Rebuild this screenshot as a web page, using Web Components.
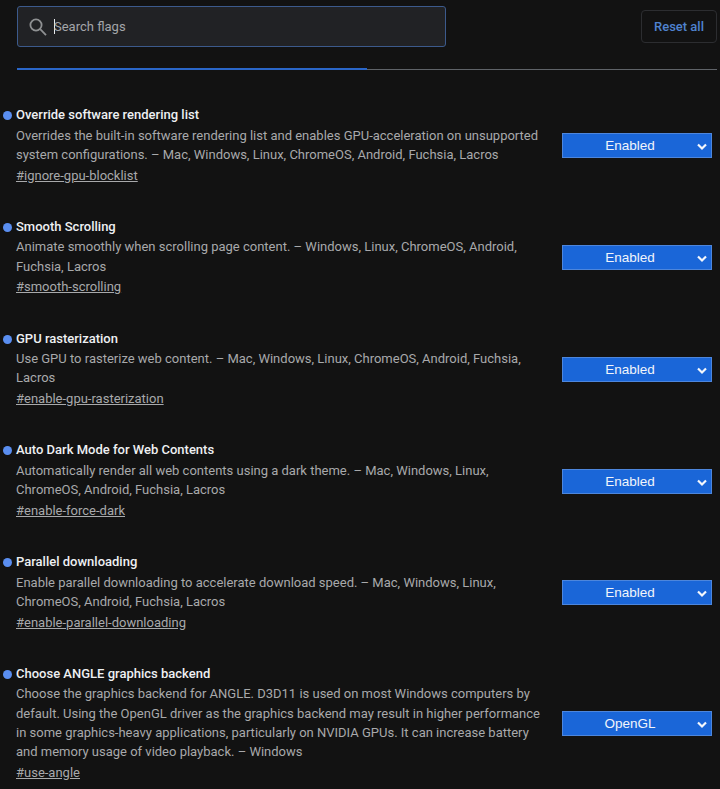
<!DOCTYPE html>
<html lang="en">
<head>
<meta charset="utf-8">
<title>Flags</title>
<style>
  html, body { margin: 0; background: #121212; }
  body { font-family: Roboto, "Liberation Sans", sans-serif; font-size: 13px; overflow: hidden; height: 789px; }
</style>
</head>
<body>
<flags-page>
  <flag-item name="Override software rendering list" link="#ignore-gpu-blocklist" value="Enabled">Overrides the built-in software rendering list and enables GPU-acceleration on unsupported system configurations. – Mac, Windows, Linux, ChromeOS, Android, Fuchsia, Lacros</flag-item>
  <flag-item name="Smooth Scrolling" link="#smooth-scrolling" value="Enabled">Animate smoothly when scrolling page content. – Windows, Linux, ChromeOS, Android, Fuchsia, Lacros</flag-item>
  <flag-item name="GPU rasterization" link="#enable-gpu-rasterization" value="Enabled">Use GPU to rasterize web content. – Mac, Windows, Linux, ChromeOS, Android, Fuchsia, Lacros</flag-item>
  <flag-item name="Auto Dark Mode for Web Contents" link="#enable-force-dark" value="Enabled">Automatically render all web contents using a dark theme. – Mac, Windows, Linux, ChromeOS, Android, Fuchsia, Lacros</flag-item>
  <flag-item name="Parallel downloading" link="#enable-parallel-downloading" value="Enabled">Enable parallel downloading to accelerate download speed. – Mac, Windows, Linux, ChromeOS, Android, Fuchsia, Lacros</flag-item>
  <flag-item name="Choose ANGLE graphics backend" link="#use-angle" value="OpenGL">Choose the graphics backend for ANGLE. D3D11 is used on most Windows computers by default. Using the OpenGL driver as the graphics backend may result in higher performance in some graphics-heavy applications, particularly on NVIDIA GPUs. It can increase battery and memory usage of video playback. – Windows</flag-item>
</flags-page>

<script>
class FlagsPage extends HTMLElement {
    constructor() {
        super();
        this.attachShadow({ mode: "open" });
        this.shadowRoot.innerHTML = `
            <style>
                :host{
                    display: block;
                    color: #a8a9ab;
                }
                #header{
                    display: flex;
                    justify-content: space-between;
                    align-items: center;
                    padding: 6px 3px 0 17px;
                }
                #search{
                    box-sizing: border-box;
                    width: 429px;
                    height: 41px;
                    display: flex;
                    align-items: center;
                    padding-left: 11px;
                    background: #212225;
                    border: 1px solid #3c5a8c;
                    border-radius: 3px;
                    color: #a4a6a9;
                    font-size: 13px;
                }
                #search svg{
                    flex: none;
                    margin-right: 5px;
                }
                #caret{
                    width: 1px;
                    height: 15px;
                    background: #e8eaed;
                    margin-right: -1px;
                }
                #reset{
                    box-sizing: border-box;
                    width: 76px;
                    height: 33px;
                    display: flex;
                    align-items: center;
                    justify-content: center;
                    border: 1px solid #2c2d30;
                    border-radius: 4px;
                    color: #4f82cf;
                    font-weight: 500;
                    font-size: 13px;
                }
                #tabs{
                    display: flex;
                    margin: 21px 3px 0 17px;
                    height: 2px;
                    align-items: center;
                }
                #tab-active{
                    width: 350px;
                    height: 2px;
                    background: #2a66c8;
                }
                #tab-rest{
                    flex: 1;
                    height: 1px;
                    background: #5f6368;
                }
                #list{
                    display: flex;
                    flex-direction: column;
                    gap: 31.95px;
                    padding-top: 35px;
                }
            </style>
            <div id="header">
                <div id="search">
                    <svg width="20" height="20" viewBox="0 0 20 20" fill="none" stroke="#8f9193" stroke-width="1.8">
                        <circle cx="7" cy="8" r="5.6"></circle>
                        <path d="M11.2 12.2 L17 18.2"></path>
                    </svg>
                    <span id="caret"></span><span>Search flags</span>
                </div>
                <div id="reset">Reset all</div>
            </div>
            <div id="tabs"><div id="tab-active"></div><div id="tab-rest"></div></div>
            <div id="list"><slot></slot></div>
        `;
    }
}

class FlagItem extends HTMLElement {
    constructor() {
        super();
        this.attachShadow({ mode: "open" });
        this.shadowRoot.innerHTML = `
            <style>
                :host{
                    display: flex;
                    align-items: center;
                    padding: 0 8px 0 3px;
                    font-size: 13px;
                    line-height: 19.2px;
                }
                #dot{
                    flex: none;
                    align-self: flex-start;
                    width: 9px;
                    height: 9px;
                    margin: 6px 4px 0 0;
                    border-radius: 50%;
                    background: #5a8ef0;
                }
                #body{
                    flex: 1;
                    min-width: 0;
                    padding-right: 22px;
                }
                #name{
                    color: #eef0f2;
                    font-weight: 500;
                    margin-bottom: 1.5px;
                }
                #link{
                    display: block;
                    margin-top: 1.5px;
                    color: #a8a9ab;
                    text-decoration: underline;
                }
                #select{
                    flex: none;
                    box-sizing: border-box;
                    width: 150px;
                    height: 25px;
                    margin-top: 2px;
                    position: relative;
                    display: flex;
                    align-items: center;
                    justify-content: center;
                    padding-right: 14px;
                    background: #1a66d8;
                    border: 1px solid #4d86dc;
                    color: #f1f5fb;
                    font-family: "Liberation Sans", Arial, sans-serif;
                    font-size: 13.5px;
                }
                #select svg{
                    position: absolute;
                    right: 4px;
                    top: 9px;
                }
            </style>
            <div id="dot"></div>
            <div id="body">
                <div id="name"></div>
                <div id="desc"><slot></slot></div>
                <a id="link"></a>
            </div>
            <div id="select">
                <span id="value"></span>
                <svg width="10" height="8" viewBox="0 0 10 8" fill="none" stroke="#f4f7fc" stroke-width="2.2">
                    <path d="M1 1.5 L5 5.5 L9 1.5"></path>
                </svg>
            </div>
        `;
    }

    connectedCallback() {
        this.shadowRoot.querySelector("#name").textContent = this.getAttribute("name");
        this.shadowRoot.querySelector("#link").textContent = this.getAttribute("link");
        this.shadowRoot.querySelector("#value").textContent = this.getAttribute("value");
    }
}

customElements.define("flags-page", FlagsPage);
customElements.define("flag-item", FlagItem);
</script>
</body>
</html>
